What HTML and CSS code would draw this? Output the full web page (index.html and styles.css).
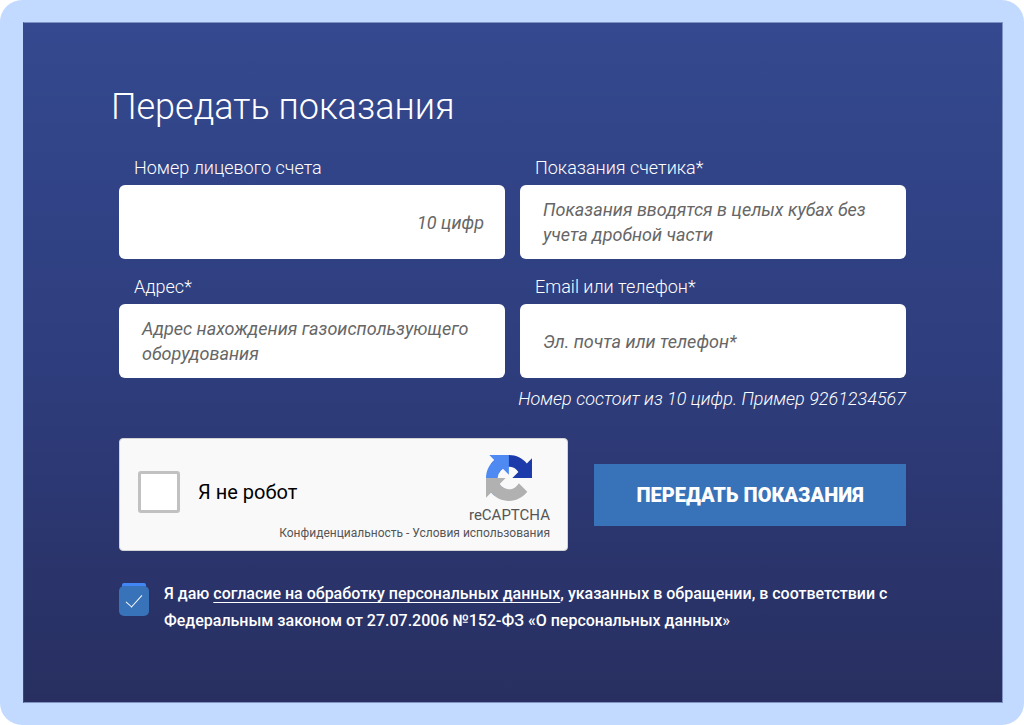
FILE: index.html
```html
<!DOCTYPE html>
<html lang="ru">
<head>
    <meta charset="UTF-8">
    <meta name="viewport" content="width=device-width, initial-scale=1.0">
    <title>Передать показания</title>
    <link rel="stylesheet" href="styles.css">
</head>
<body>
    <main class="page">
        <section class="panel">
            <h1>Передать показания</h1>

            <form class="form">
                <!-- Fields -->
                <div class="fields">
                    <div class="field">
                        <label for="account">Номер лицевого счета</label>
                        <input type="text" id="account" class="align-right" placeholder="10 цифр">
                    </div>
                    <div class="field">
                        <label for="reading">Показания счетика*</label>
                        <textarea id="reading" rows="2" placeholder="Показания вводятся в целых кубах без учета дробной части"></textarea>
                    </div>
                    <div class="field">
                        <label for="address">Адрес*</label>
                        <textarea id="address" rows="2" placeholder="Адрес нахождения газоиспользующего оборудования"></textarea>
                    </div>
                    <div class="field">
                        <label for="contact">Email или телефон*</label>
                        <input type="text" id="contact" placeholder="Эл. почта или телефон*">
                        <p class="hint">Номер состоит из 10 цифр. Пример 9261234567</p>
                    </div>
                </div>

                <!-- Captcha and submit -->
                <div class="actions">
                    <div class="captcha">
                        <div class="captcha-main">
                            <input type="checkbox" id="robot" class="captcha-box">
                            <label for="robot">Я не робот</label>
                            <div class="captcha-brand">
                                <svg viewBox="0 0 64 64" width="46" height="46" aria-hidden="true">
                                    <path fill="#1c3aa9" d="M64 31.955l-.033-1.37V4.687l-7.16 7.16C50.948 4.674 42.033.093 32.05.093c-10.4 0-19.622 4.96-25.458 12.64l11.736 11.86a15.55 15.55 0 0 1 4.754-5.334c2.05-1.6 4.952-2.906 8.968-2.906.485 0 .86.057 1.135.163 4.976.393 9.288 3.14 11.828 7.124l-8.307 8.307L64 31.953"/>
                                    <path fill="#4f8af3" d="M31.862.094l-1.37.033H4.594l7.16 7.16C4.58 13.147 0 22.06 0 32.046c0 10.4 4.96 19.622 12.64 25.458L24.5 45.768a15.55 15.55 0 0 1-5.334-4.754c-1.6-2.05-2.906-4.952-2.906-8.968 0-.485.057-.86.163-1.135.393-4.976 3.14-9.288 7.124-11.828l8.307 8.307L31.86.095"/>
                                    <path fill="#b1b1b1" d="M.001 32.045l.033 1.37v25.898l7.16-7.16c5.86 7.173 14.774 11.754 24.76 11.754 10.4 0 19.622-4.96 25.458-12.64l-11.736-11.86a15.55 15.55 0 0 1-4.754 5.334c-2.05 1.6-4.952 2.906-8.968 2.906-.485 0-.86-.057-1.135-.163-4.976-.393-9.288-3.14-11.828-7.124l8.307-8.307c-10.522.04-22.4.066-27.295-.005"/>
                                </svg>
                                <span>reCAPTCHA</span>
                            </div>
                        </div>
                        <div class="captcha-links">
                            <a href="#">Конфиденциальность</a> - <a href="#">Условия использования</a>
                        </div>
                    </div>
                    <button type="submit" class="submit">ПЕРЕДАТЬ ПОКАЗАНИЯ</button>
                </div>

                <!-- Consent -->
                <div class="consent">
                    <input type="checkbox" id="consent" checked>
                    <label for="consent">Я даю <a href="#">согласие на обработку персональных данных</a>, указанных в обращении, в соответствии с Федеральным законом от 27.07.2006 №152-ФЗ «О персональных данных»</label>
                </div>
            </form>
        </section>
    </main>
</body>
</html>
```
FILE: styles.css
```css
* {
    box-sizing: border-box;
}

body {
    margin: 0;
    background-color: #fff;
    color: #fff;
    font-family: Roboto, "Liberation Sans", sans-serif;
    font-size: 18px;
}

.page {
    display: flex;
    min-height: 100vh;
    padding: 22px 21px 22px 23px;
    background-color: #c2daff;
    border-radius: 22px;
}

.panel {
    flex: 1;
    padding: 59px 86px 60px 85px;
    border: 1px solid #7f92c4;
    border-left-color: #34498f;
    background: linear-gradient(#34498f, #2e3d7d 50%, #282f60);
}

h1 {
    margin: 0 2px;
    font-size: 36px;
    font-weight: 300;
    line-height: 50px;
}

.form {
    margin: 23px 10px 0;
}

/* Fields */
.fields {
    display: grid;
    grid-template-columns: repeat(2, minmax(0, 1fr));
    gap: 15px;
}

.field {
    display: flex;
    flex-direction: column;
}

.field label {
    margin-bottom: 4px;
    padding-left: 15px;
    font-weight: 300;
    line-height: 26px;
}

.field input,
.field textarea {
    width: 100%;
    height: 74px;
    padding: 12px 21px 12px 23px;
    border: none;
    border-radius: 6px;
    background-color: #fff;
    color: #222;
    font-family: inherit;
    font-size: 18px;
    font-style: italic;
    line-height: 25px;
    resize: none;
}

.field .align-right {
    text-align: right;
}

.field ::placeholder {
    color: #666;
    opacity: 1;
}

.hint {
    display: flex;
    justify-content: flex-end;
    margin: 8px 0 0;
    font-style: italic;
    font-weight: 300;
    line-height: 26px;
    white-space: nowrap;
}

/* Captcha and submit */
.actions {
    display: grid;
    grid-template-columns: 449fr 312fr;
    gap: 26px;
    align-items: center;
    margin-top: 26px;
}

.captcha {
    padding: 16px 17px 9px 18px;
    border: 1px solid #d3d3d3;
    border-radius: 4px;
    background-color: #f9f9f9;
    color: #000;
}

.captcha-main {
    display: flex;
    align-items: center;
    font-size: 20px;
}

.captcha-box {
    appearance: none;
    width: 42px;
    height: 42px;
    margin: 0 18px 0 0;
    border: 3px solid #c1c1c1;
    border-radius: 3px;
    background-color: #fff;
}

.captcha-brand {
    display: flex;
    flex-direction: column;
    align-items: center;
    margin-left: auto;
    color: #555;
    font-size: 15px;
    line-height: 28px;
}

.captcha-links {
    margin-top: -4px;
    color: #555;
    font-size: 12px;
    line-height: 16px;
    text-align: right;
}

.captcha-links a {
    color: inherit;
    text-decoration: none;
}

.submit {
    height: 62px;
    border: none;
    background-color: #3872b9;
    color: #fff;
    font-family: inherit;
    font-size: 20px;
    font-weight: 900;
    cursor: pointer;
}

/* Consent */
.consent {
    display: flex;
    align-items: flex-start;
    gap: 15px;
    margin-top: 29px;
    font-size: 16px;
    font-weight: 500;
    line-height: 27px;
}

.consent input {
    appearance: none;
    display: flex;
    flex: none;
    justify-content: center;
    width: 30px;
    height: 30px;
    margin: 6px 0 0;
    border-radius: 5px;
    background-color: #3872b9;
    box-shadow: 0 -6px 0 -3px #4285f4;
}

.consent input:checked::before {
    content: "";
    width: 7px;
    height: 15px;
    margin-top: 5px;
    border: solid #fff;
    border-width: 0 1px 1px 0;
    transform: rotate(42deg);
}

.consent a {
    color: inherit;
    text-decoration-thickness: 1px;
    text-underline-offset: 3px;
}
```
